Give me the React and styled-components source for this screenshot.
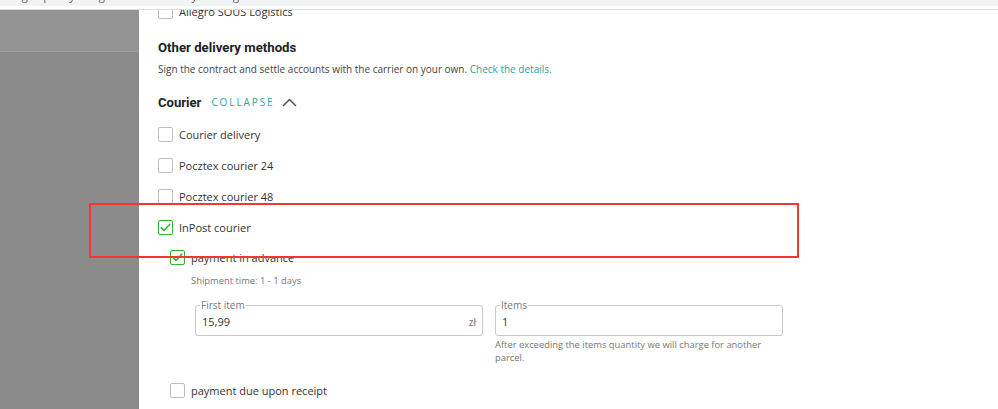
import React from "react";
import styled, { createGlobalStyle } from "styled-components";

const Global = createGlobalStyle`
  html, body { margin: 0; padding: 0; background: #fff; }
  body { font-family: "Open Sans", "Liberation Sans", sans-serif; color: #333; }
  * { box-sizing: border-box; }
`;

const Page = styled.div`
  position: relative;
  width: 998px;
  height: 409px;
  overflow: hidden;
  display: flex;
  flex-direction: column;
`;

const AddressStrip = styled.div`
  height: 6px;
  background: #f1f3f4;
  overflow: hidden;
  font-size: 12px;
  line-height: 16px;
  color: #6a6a6a;
  padding-left: 2px;
`;

const AddressText = styled.div`
  margin-top: -12px;
  white-space: nowrap;
  filter: blur(0.5px);
`;

const Spacer = styled.div`
  height: 3px;
  background: #fff;
`;

const Divider = styled.div`
  height: 1px;
  background: #dcdcdc;
`;

const Body = styled.div`
  flex: 1;
  display: flex;
  min-height: 0;
`;

const Sidebar = styled.div`
  width: 139px;
  display: flex;
  flex-direction: column;
  background: #8b8b8b;
`;

const SidebarTop = styled.div`
  height: 42px;
  background: #939393;
  border-bottom: 1px solid #9c9c9c;
`;

const Main = styled.div`
  flex: 1;
  overflow: hidden;
  padding-left: 19px;
  background: #fff;
`;

const Content = styled.div`
  margin-top: -14px;
  display: flex;
  flex-direction: column;
`;

const Row = styled.label`
  height: ${(p) => p.$h || 31}px;
  display: flex;
  align-items: center;
  gap: 6px;
  font-size: 11px;
  color: #333;
`;

const Box = styled.span`
  width: 15px;
  height: 15px;
  flex: none;
  border-radius: 2px;
  border: ${(p) => (p.$checked ? "1.5px solid #2db52d" : "1px solid #bdbdbd")};
  display: flex;
  align-items: center;
  justify-content: center;
  background: #fff;
`;

const Heading = styled.h3`
  margin: 11px 0 0;
  font-family: Roboto, "Open Sans", sans-serif;
  font-size: 13.2px;
  line-height: 20px;
  font-weight: 700;
  color: #222;
`;

const Sub = styled.p`
  margin: 3px 0 0;
  font-size: 10px;
  line-height: 16px;
  color: #444;
`;

const Link = styled.a`
  color: #20a89a;
  text-decoration: none;
`;

const SectionHead = styled.div`
  margin-top: 15px;
  height: 20px;
  display: flex;
  align-items: center;
`;

const SectionTitle = styled.span`
  font-family: Roboto, "Open Sans", sans-serif;
  font-size: 13.1px;
  font-weight: 700;
  color: #222;
`;

const Collapse = styled.span`
  margin-left: 10px;
  font-size: 10px;
  letter-spacing: 1.9px;
  color: #26a99a;
`;

const Chevron = styled.svg`
  margin-left: 7px;
`;

const List = styled.div`
  margin-top: 6.5px;
  display: flex;
  flex-direction: column;
`;

const Details = styled.div`
  padding-left: 12px;
  display: flex;
  flex-direction: column;
`;

const Meta = styled.div`
  margin-top: 2.5px;
  padding-left: 33px;
  font-size: 9.4px;
  line-height: 14px;
  color: #777;
`;

const Fields = styled.div`
  margin-top: 11px;
  padding-left: 37px;
  display: grid;
  grid-template-columns: 288px 288px;
  column-gap: 12px;
`;

const FieldCol = styled.div`
  display: flex;
  flex-direction: column;
  min-width: 0;
`;

const Fieldset = styled.fieldset`
  margin: 0;
  padding: 3px 6px 0;
  width: 100%;
  min-width: 0;
  height: 37px;
  border: 1px solid #c8c8c8;
  border-radius: 3px;
  display: flex;
  align-items: center;
  justify-content: space-between;
`;

const Legend = styled.legend`
  padding: 0 1px;
  margin-left: -2px;
  font-size: 10px;
  line-height: 12px;
  color: #777;
`;

const Value = styled.span`
  font-size: 11px;
  color: #333;
`;

const Unit = styled.span`
  font-size: 10px;
  color: #777;
`;

const Help = styled.div`
  margin-top: 2px;
  font-size: 9.4px;
  line-height: 13px;
  color: #777;
  padding-right: 6px;
`;

const LastRow = styled.div`
  margin-top: 11px;
  padding-left: 12px;
`;

const Annotation = styled.div`
  position: absolute;
  left: 89px;
  top: 203px;
  width: 710px;
  height: 55px;
  border: 2px solid #f23535;
  pointer-events: none;
`;

function Check({ checked }) {
  return (
    <Box $checked={checked}>
      {checked && (
        <svg width="11" height="9" viewBox="0 0 11 9">
          <path d="M1.2 4.6 L4 7.4 L9.8 1.2" fill="none" stroke="#2db52d" strokeWidth="1.5" strokeLinecap="round" strokeLinejoin="round" />
        </svg>
      )}
    </Box>
  );
}

export default function App() {
  return (
    <Page>
      <Global />
      <AddressStrip>
        <AddressText>allegro.pl/my-allegro/sales/delivery-settings/edit</AddressText>
      </AddressStrip>
      <Spacer />
      <Divider />
      <Body>
        <Sidebar>
          <SidebarTop />
        </Sidebar>
        <Main>
          <Content>
            <Row>
              <Check />
              Allegro SOUS Logistics
            </Row>
            <Heading>Other delivery methods</Heading>
            <Sub>
              Sign the contract and settle accounts with the carrier on your own.{" "}
              <Link href="#">Check the details.</Link>
            </Sub>
            <SectionHead>
              <SectionTitle>Courier</SectionTitle>
              <Collapse>COLLAPSE</Collapse>
              <Chevron width="15" height="9" viewBox="0 0 15 9">
                <path d="M1 8 L7.5 1.5 L14 8" fill="none" stroke="#555" strokeWidth="1.5" />
              </Chevron>
            </SectionHead>
            <List>
              <Row><Check />Courier delivery</Row>
              <Row><Check />Pocztex courier 24</Row>
              <Row><Check />Pocztex courier 48</Row>
              <Row><Check checked />InPost courier</Row>
              <Details>
                <Row $h={29}><Check checked />payment in advance</Row>
              </Details>
            </List>
            <Meta>Shipment time: 1 - 1 days</Meta>
            <Fields>
              <FieldCol>
                <Fieldset>
                  <Legend>First item</Legend>
                  <Value>15,99</Value>
                  <Unit>zł</Unit>
                </Fieldset>
              </FieldCol>
              <FieldCol>
                <Fieldset>
                  <Legend>Items</Legend>
                  <Value>1</Value>
                </Fieldset>
                <Help>After exceeding the items quantity we will charge for another parcel.</Help>
              </FieldCol>
            </Fields>
            <LastRow>
              <Row><Check />payment due upon receipt</Row>
            </LastRow>
          </Content>
        </Main>
      </Body>
      <Annotation />
    </Page>
  );
}
